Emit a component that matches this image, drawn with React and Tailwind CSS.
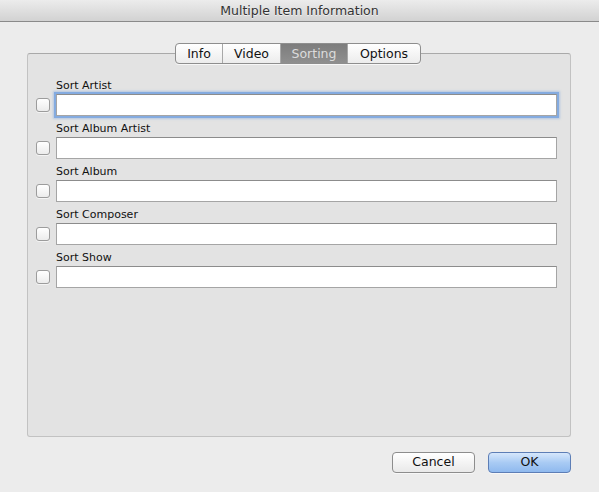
import React from "react";

const rows = ["Sort Artist", "Sort Album Artist", "Sort Album", "Sort Composer", "Sort Show"];
const tabs = ["Info", "Video", "Sorting", "Options"];
const tabW = { Info: "w-[46px]", Video: "w-[58px]", Sorting: "w-[67px]", Options: "w-[73px]" };

export default function App() {
  return (
    <div className="w-[599px] h-[492px] bg-[#ececec] flex flex-col overflow-hidden font-['DejaVu_Sans',sans-serif] text-[#1a1a1a]">
      <div className="h-[22px] shrink-0 bg-gradient-to-b from-[#ececec] to-[#d2d2d2] border-b border-[#8a8a8a] flex items-center justify-center pt-[2px]">
        <span className="text-[12.5px] text-[#333] leading-none [text-shadow:0_1px_0_rgba(255,255,255,0.6)]">Multiple Item Information</span>
      </div>
      <div className="flex flex-col pt-[21px] px-[27px]">
        <div className="flex justify-center relative z-10 h-[21px] pr-[3px]">
          <div className="flex h-[21px] rounded-[4px] border border-[#8e8e8e] bg-gradient-to-b from-white to-[#ececec] overflow-hidden shadow-[0_1px_0_rgba(255,255,255,0.7)]">
            {tabs.map((t, i) => (
              <div
                key={t}
                className={
                  (t === "Sorting"
                    ? "bg-gradient-to-b from-[#7d7d7d] to-[#8f8f8f] text-[#dcdcdc] "
                    : "text-[#111] ") +
                  (i > 0 ? "border-l border-[#a8a8a8] " : "") +
                  tabW[t] +
                  " flex items-center justify-center text-[12.5px] leading-none pt-[1px]"
                }
              >
                {t}
              </div>
            ))}
          </div>
        </div>
        <div className="-mt-[11px] h-[384px] w-[544px] rounded-[3px] border border-[#c2c2c2] border-t-[#a9a9a9] bg-[#e3e3e3] flex flex-col pt-[25px] pl-[8px] pr-[13px] gap-[6px]">
          {rows.map((r, i) => (
            <div key={r} className="flex flex-col gap-[2px]">
              <div className="h-[13px] pl-[20px] text-[11px] leading-[13px] text-[#111]">{r}</div>
              <div className="flex items-center gap-[6px]">
                <div className="w-[14px] h-[14px] rounded-[3px] border border-[#9c9c9c] bg-gradient-to-b from-white to-[#ececec] shadow-[0_1px_0_rgba(255,255,255,0.6)]" />
                <div
                  className={
                    "h-[22px] w-[502px] bg-white border border-[#a5a5a5] border-t-[#8c8c8c] " +
                    (i === 0 ? "shadow-[0_0_0_2px_#84abe0,0_0_2px_3px_rgba(132,171,224,0.5)] border-[#6f93c8]" : "")
                  }
                />
              </div>
            </div>
          ))}
        </div>
        <div className="flex justify-end gap-[13px] mt-[15px] pr-[1px]">
          <div className="w-[83px] h-[21px] rounded-[4px] border border-[#8d8d8d] bg-gradient-to-b from-white to-[#e9e9e9] flex items-center justify-center text-[12.5px] leading-none text-[#111] shadow-[0_1px_0_rgba(255,255,255,0.6)]">
            Cancel
          </div>
          <div className="w-[83px] h-[21px] rounded-[4px] border border-[#5d7eb6] bg-gradient-to-b from-[#d6e7fc] via-[#a9cbf4] to-[#8fb9ee] flex items-center justify-center text-[12.5px] leading-none text-[#111] shadow-[0_1px_0_rgba(255,255,255,0.6)]">
            OK
          </div>
        </div>
      </div>
    </div>
  );
}
